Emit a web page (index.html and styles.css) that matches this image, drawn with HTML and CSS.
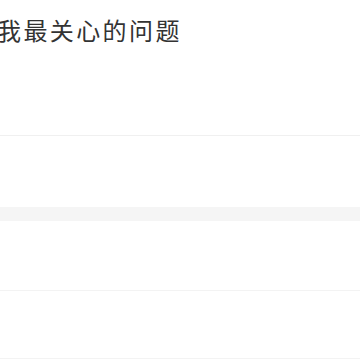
FILE: index.html
```html
<!DOCTYPE html>
<html lang="zh-CN">
<head>
  <meta charset="UTF-8">
  <meta name="viewport" content="width=device-width, initial-scale=1.0">
  <title>我最关心的问题</title>
  <link rel="stylesheet" href="styles.css">
</head>
<body>
  <div class="page">
    <div class="header">
      <h2 class="title">我最关心的问题</h2>
    </div>
    <div class="block first"></div>
    <div class="divider"></div>
    <div class="block second"></div>
    <div class="block third"></div>
  </div>
</body>
</html>
```

FILE: styles.css
```css
/* 基础样式 */
body {
  margin: 0;
  background: #ffffff;
  font-family: "Noto Sans CJK SC", "Noto Sans", sans-serif;
}

.page {
  width: 360px;
  overflow: hidden;
}

.header {
  height: 135px;
  border-bottom: 1px solid #f0f0f0;
}

.title {
  margin: 0 0 0 -3px;
  padding-top: 15px;
  font-size: 24px;
  line-height: 30px;
  font-weight: normal;
  letter-spacing: 2.4px;
  color: #333333;
}

.block.first {
  height: 71px;
}

.divider {
  height: 14px;
  background: #f5f5f5;
}

.block.second {
  height: 69px;
  border-bottom: 1px solid #f3f3f3;
}

.block.third {
  height: 67px;
  border-bottom: 1px solid #f3f3f3;
}
```
